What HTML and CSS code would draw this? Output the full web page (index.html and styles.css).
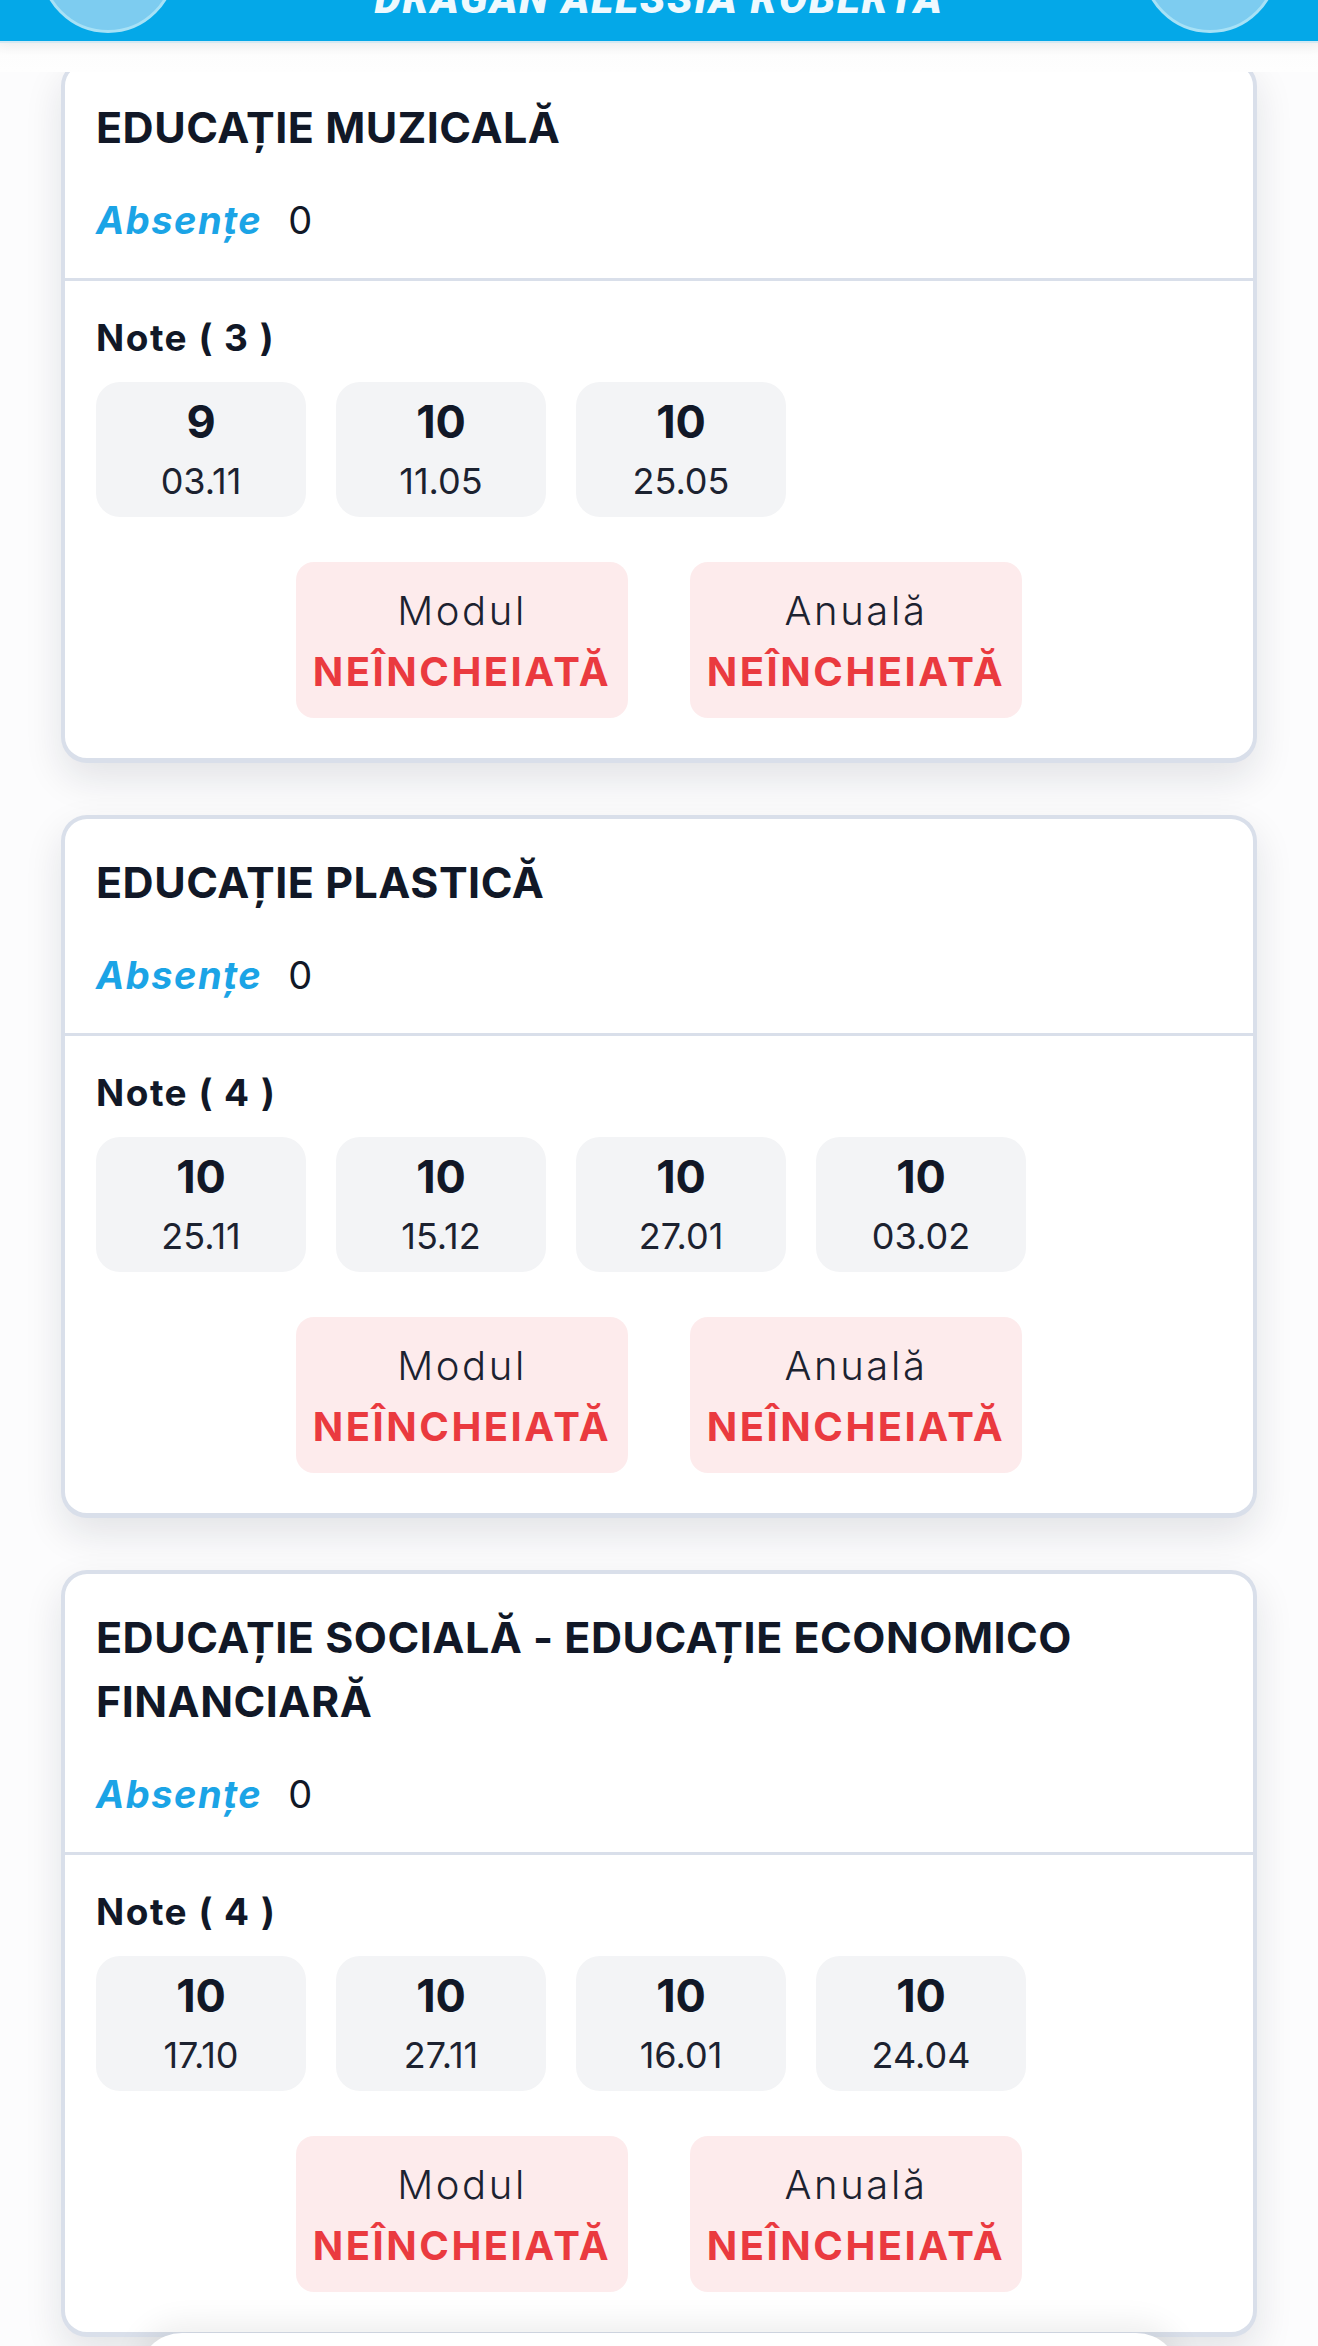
FILE: index.html
```html
<!DOCTYPE html>
<html lang="ro">
<head>
    <meta charset="UTF-8">
    <meta name="viewport" content="width=device-width, initial-scale=1.0">
    <title>Situație școlară</title>

    <link rel="stylesheet" href="styles.css">
</head>
<body>

    <header class="topbar">
        <div class="topbar-btn"></div>
        <h1 class="student-name">DRAGAN ALESSIA ROBERTA</h1>
        <div class="topbar-btn"></div>
    </header>

    <div class="fade"></div>

    <main class="feed">

        <section class="card">
            <div class="card-head">
                <h2 class="subject">EDUCAȚIE MUZICALĂ</h2>
                <p class="absences"><span class="absences-label">Absențe</span><span class="absences-count">0</span></p>
            </div>
            <div class="card-body">
                <h3 class="grades-title">Note ( 3 )</h3>
                <div class="grades">
                    <div class="grade"><span class="grade-value">9</span><span class="grade-date">03.11</span></div>
                    <div class="grade"><span class="grade-value">10</span><span class="grade-date">11.05</span></div>
                    <div class="grade"><span class="grade-value">10</span><span class="grade-date">25.05</span></div>
                </div>
                <div class="averages">
                    <div class="average"><span class="average-label">Modul</span><span class="average-value">NEÎNCHEIATĂ</span></div>
                    <div class="average"><span class="average-label">Anuală</span><span class="average-value">NEÎNCHEIATĂ</span></div>
                </div>
            </div>
        </section>

        <section class="card">
            <div class="card-head">
                <h2 class="subject">EDUCAȚIE PLASTICĂ</h2>
                <p class="absences"><span class="absences-label">Absențe</span><span class="absences-count">0</span></p>
            </div>
            <div class="card-body">
                <h3 class="grades-title">Note ( 4 )</h3>
                <div class="grades">
                    <div class="grade"><span class="grade-value">10</span><span class="grade-date">25.11</span></div>
                    <div class="grade"><span class="grade-value">10</span><span class="grade-date">15.12</span></div>
                    <div class="grade"><span class="grade-value">10</span><span class="grade-date">27.01</span></div>
                    <div class="grade"><span class="grade-value">10</span><span class="grade-date">03.02</span></div>
                </div>
                <div class="averages">
                    <div class="average"><span class="average-label">Modul</span><span class="average-value">NEÎNCHEIATĂ</span></div>
                    <div class="average"><span class="average-label">Anuală</span><span class="average-value">NEÎNCHEIATĂ</span></div>
                </div>
            </div>
        </section>

        <section class="card">
            <div class="card-head">
                <h2 class="subject">EDUCAȚIE SOCIALĂ - EDUCAȚIE ECONOMICO FINANCIARĂ</h2>
                <p class="absences"><span class="absences-label">Absențe</span><span class="absences-count">0</span></p>
            </div>
            <div class="card-body">
                <h3 class="grades-title">Note ( 4 )</h3>
                <div class="grades">
                    <div class="grade"><span class="grade-value">10</span><span class="grade-date">17.10</span></div>
                    <div class="grade"><span class="grade-value">10</span><span class="grade-date">27.11</span></div>
                    <div class="grade"><span class="grade-value">10</span><span class="grade-date">16.01</span></div>
                    <div class="grade"><span class="grade-value">10</span><span class="grade-date">24.04</span></div>
                </div>
                <div class="averages">
                    <div class="average"><span class="average-label">Modul</span><span class="average-value">NEÎNCHEIATĂ</span></div>
                    <div class="average"><span class="average-label">Anuală</span><span class="average-value">NEÎNCHEIATĂ</span></div>
                </div>
            </div>
        </section>

    </main>

    <div class="dock"></div>

</body>
</html>
```

FILE: styles.css
```css
body{
    margin: 0;
    height: 2346px;
    overflow: hidden;
    position: relative;
    background-color: #fcfcfd;
    font-family: Inter, "Noto Sans", sans-serif;
    color: #111827;
}

/* bara de sus */
.topbar{
    position: relative;
    z-index: 3;
    display: flex;
    align-items: flex-start;
    height: 41px;
    padding: 0 40px;
    overflow: hidden;
    background-color: #04a8e8;
    box-shadow: 0 2px 0 #d3e9f3, 0 5px 12px rgba(0,0,0,0.04);
}

.topbar-btn{
    flex: none;
    box-sizing: border-box;
    width: 136px;
    height: 136px;
    margin-top: -103px;
    border-radius: 50%;
    border: 3px solid #a7e1f6;
    background-color: #7dccf0;
}

.student-name{
    flex: 1;
    margin: -22px 0 0;
    text-align: center;
    font-family: Roboto, "Liberation Sans", sans-serif;
    font-style: italic;
    font-weight: 900;
    font-size: 42px;
    line-height: 42px;
    letter-spacing: 1.8px;
    color: #eef9fe;
}

.fade{
    position: absolute;
    z-index: 2;
    top: 41px;
    left: 0;
    right: 0;
    height: 31px;
    background: linear-gradient(#f5f5f5, #fdfdfd 45%, #fefefe);
}

/* lista de materii */
.feed{
    display: flex;
    flex-direction: column;
    gap: 52px;
    padding: 19px 61px 0;
}

.card{
    background-color: #fff;
    border: 4px solid #d9dfea;
    border-bottom-width: 5px;
    border-radius: 26px;
    box-shadow: 0 16px 38px rgba(15,23,42,0.11);
}

.card-head{
    padding: 31px 31px 32px;
    border-bottom: 3px solid #d9dfea;
}

.subject{
    margin: 0;
    font-size: 43px;
    line-height: 64px;
    font-weight: 700;
    letter-spacing: 0.5px;
}

.absences{
    display: flex;
    align-items: baseline;
    margin: 35px 0 0;
    font-size: 38px;
    line-height: 52px;
}

.absences-label{
    color: #1ba4e6;
    font-weight: 700;
    font-style: italic;
    letter-spacing: 1.5px;
}

.absences-count{
    margin-left: 26px;
    font-weight: 400;
}

.card-body{
    padding: 31px 31px 40px;
}

.grades-title{
    margin: 0;
    font-size: 37px;
    line-height: 52px;
    font-weight: 700;
    letter-spacing: 1.5px;
}

.grades{
    display: flex;
    gap: 30px;
    margin-top: 18px;
}

.grade{
    display: flex;
    flex-direction: column;
    align-items: center;
    justify-content: center;
    gap: 16px;
    width: 210px;
    height: 135px;
    border-radius: 24px;
    background-color: #f3f4f6;
}

.grade-value{
    font-size: 45px;
    line-height: 46px;
    font-weight: 700;
}

.grade-date{
    font-size: 36px;
    line-height: 40px;
    color: #1c2230;
}

.averages{
    display: flex;
    justify-content: center;
    gap: 62px;
    margin-top: 45px;
}

.average{
    display: flex;
    flex-direction: column;
    align-items: center;
    gap: 17px;
    box-sizing: border-box;
    width: 332px;
    height: 156px;
    padding: 29px 0 21px;
    border-radius: 18px;
    background-color: #fdebec;
}

.average-label{
    font-size: 40px;
    line-height: 40px;
    font-weight: 300;
    letter-spacing: 2.6px;
    color: #1c2230;
}

.average-value{
    font-size: 40px;
    line-height: 48px;
    font-weight: 700;
    letter-spacing: 2.5px;
    color: #ea3a3f;
}

/* bara de jos, abia vizibila */
.dock{
    position: absolute;
    z-index: 2;
    top: 2333px;
    left: 138px;
    right: 138px;
    height: 80px;
    border-radius: 44px 44px 0 0;
    background-color: #fff;
    box-shadow: 0 -10px 30px rgba(0,0,0,0.07);
}
```
